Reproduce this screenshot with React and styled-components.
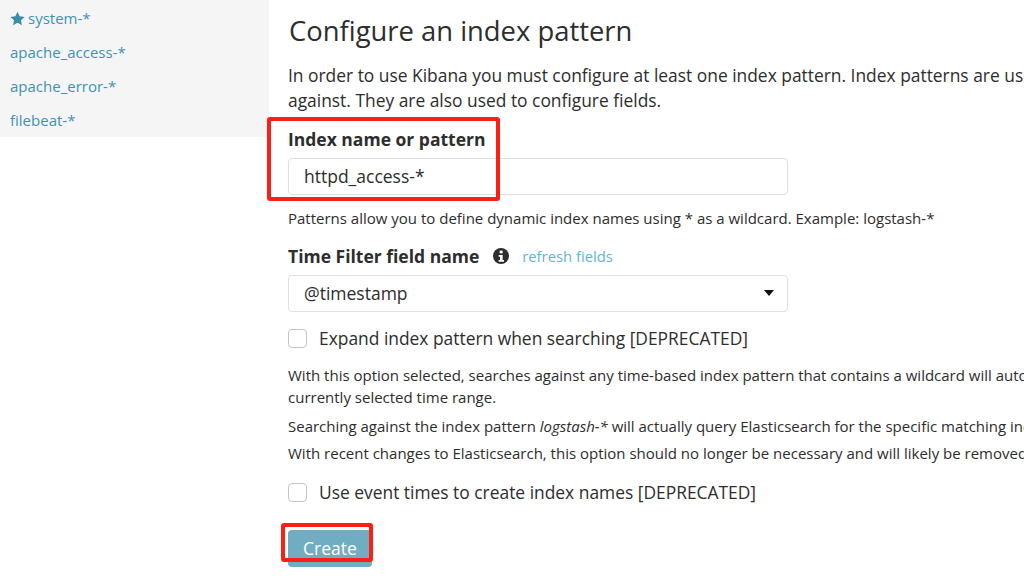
import React from "react";
import styled, { createGlobalStyle } from "styled-components";

const Global = createGlobalStyle`
  html, body {
    margin: 0;
    padding: 0;
    background: #fff;
    overflow: hidden;
  }
  body {
    font-family: "Open Sans", sans-serif;
    color: #2d2d2d;
  }
`;

const Page = styled.div`
  position: relative;
  display: flex;
  align-items: flex-start;
  width: 1024px;
  height: 584px;
  overflow: hidden;
`;

const Sidebar = styled.ul`
  flex: 0 0 269px;
  height: 137px;
  margin: 0;
  padding: 1px 0 0 10px;
  box-sizing: border-box;
  list-style: none;
  background: #f5f5f5;
`;

const SideItem = styled.li`
  display: flex;
  align-items: center;
  gap: 3px;
  height: 34px;
  font-size: 15px;
  color: #3f93b1;
`;

const Main = styled.main`
  flex: 1;
  min-width: 0;
  padding: 0 0 0 19px;
`;

const Title = styled.h1`
  margin: 13px 0 0;
  padding-left: 1px;
  font-size: 27.4px;
  line-height: 36px;
  font-weight: 400;
  color: #2d2d2d;
`;

const Lead = styled.p`
  margin: 14px 0 0;
  font-size: 17.4px;
  line-height: 25px;
  white-space: nowrap;
`;

const FieldLabel = styled.label`
  display: flex;
  align-items: center;
  margin-top: ${p => p.$top}px;
  height: 26px;
  font-size: 17.5px;
  font-weight: 700;
`;

const Field = styled.div`
  display: flex;
  align-items: center;
  justify-content: space-between;
  box-sizing: border-box;
  width: 500px;
  height: 37px;
  margin-top: 6px;
  padding: 0 13px 2px 15px;
  border: 1px solid #e0e0e0;
  border-radius: 4px;
  font-size: 17.5px;
  color: #2d2d2d;
`;

const Hint = styled.p`
  margin: ${p => p.$top}px 0 0;
  font-size: 15px;
  line-height: 22px;
  white-space: nowrap;
`;

const RefreshLink = styled.a`
  margin-left: 13px;
  font-size: 14.8px;
  font-weight: 400;
  color: #5eb6d6;
`;

const InfoIcon = styled.svg`
  width: 16px;
  height: 16px;
  margin-left: 14px;
`;

const Caret = styled.span`
  width: 0;
  height: 0;
  border-left: 5.5px solid transparent;
  border-right: 5.5px solid transparent;
  border-top: 6px solid #111;
`;

const CheckRow = styled.div`
  display: flex;
  align-items: center;
  gap: 12px;
  height: 28px;
  margin-top: ${p => p.$top}px;
  font-size: 17.4px;
`;

const Box = styled.span`
  box-sizing: border-box;
  width: 19px;
  height: 19px;
  border: 1px solid #c4c4c4;
  border-radius: 4px;
  background: #fff;
`;

const CreateButton = styled.button`
  display: block;
  width: 84px;
  height: 37px;
  margin-top: 24px;
  padding: 0 0 2px;
  border: 0;
  border-radius: 4px;
  background: #70adc3;
  color: #fff;
  font-family: inherit;
  font-size: 17.5px;
`;

// hand-drawn red annotations lying over the screenshot
const Annotation = styled.div`
  position: absolute;
  box-sizing: border-box;
  left: ${p => p.$x}px;
  top: ${p => p.$y}px;
  width: ${p => p.$w}px;
  height: ${p => p.$h}px;
  border: 4px solid #fb1f14;
  border-radius: 3px;
`;

const Star = () => (
  <svg width="15" height="15" viewBox="0 0 24 24" fill="#3a8cab">
    <path d="M12 1l3.400 7.400 8.100 1-6 5.500 1.600 8L12 18.900 4.900 22.900l1.600-8-6-5.500 8.100-1z" />
  </svg>
);

const sideItems = ["apache_access-*", "apache_error-*", "filebeat-*"];

export default function App() {
  return (
    <Page>
      <Global />
      <Sidebar>
        <SideItem>
          <Star />
          system-*
        </SideItem>
        {sideItems.map(name => (
          <SideItem key={name}>{name}</SideItem>
        ))}
      </Sidebar>
      <Main>
        <Title>Configure an index pattern</Title>
        <Lead>
          In order to use Kibana you must configure at least one index pattern. Index patterns are used to identify the
          <br />
          against. They are also used to configure fields.
        </Lead>
        <FieldLabel $top={13}>Index name or pattern</FieldLabel>
        <Field>httpd_access-*</Field>
        <Hint $top={12}>Patterns allow you to define dynamic index names using * as a wildcard. Example: logstash-*</Hint>
        <FieldLabel $top={14}>
          Time Filter field name
          <InfoIcon viewBox="0 0 24 24">
            <circle cx="12" cy="12" r="12" fill="#2d2d2d" />
            <rect x="10" y="4" width="4.500" height="4" fill="#fff" />
            <path d="M8.500 10.500h6v7.500h2v2.500h-8V18h2v-5h-2z" fill="#fff" />
          </InfoIcon>
          <RefreshLink>refresh fields</RefreshLink>
        </FieldLabel>
        <Field>
          @timestamp
          <Caret />
        </Field>
        <CheckRow $top={12}>
          <Box />
          Expand index pattern when searching [DEPRECATED]
        </CheckRow>
        <Hint $top={12}>
          With this option selected, searches against any time-based index pattern that contains a wildcard will automatically
          <br />
          currently selected time range.
        </Hint>
        <Hint $top={7}>
          Searching against the index pattern <em>logstash-*</em> will actually query Elasticsearch for the specific matching indices
        </Hint>
        <Hint $top={5}>
          With recent changes to Elasticsearch, this option should no longer be necessary and will likely be removed
        </Hint>
        <CheckRow $top={14}>
          <Box />
          Use event times to create index names [DEPRECATED]
        </CheckRow>
        <CreateButton>Create</CreateButton>
      </Main>
      <Annotation $x={267} $y={117} $w={233} $h={84} />
      <Annotation $x={281} $y={523} $w={92} $h={39} />
    </Page>
  );
}
